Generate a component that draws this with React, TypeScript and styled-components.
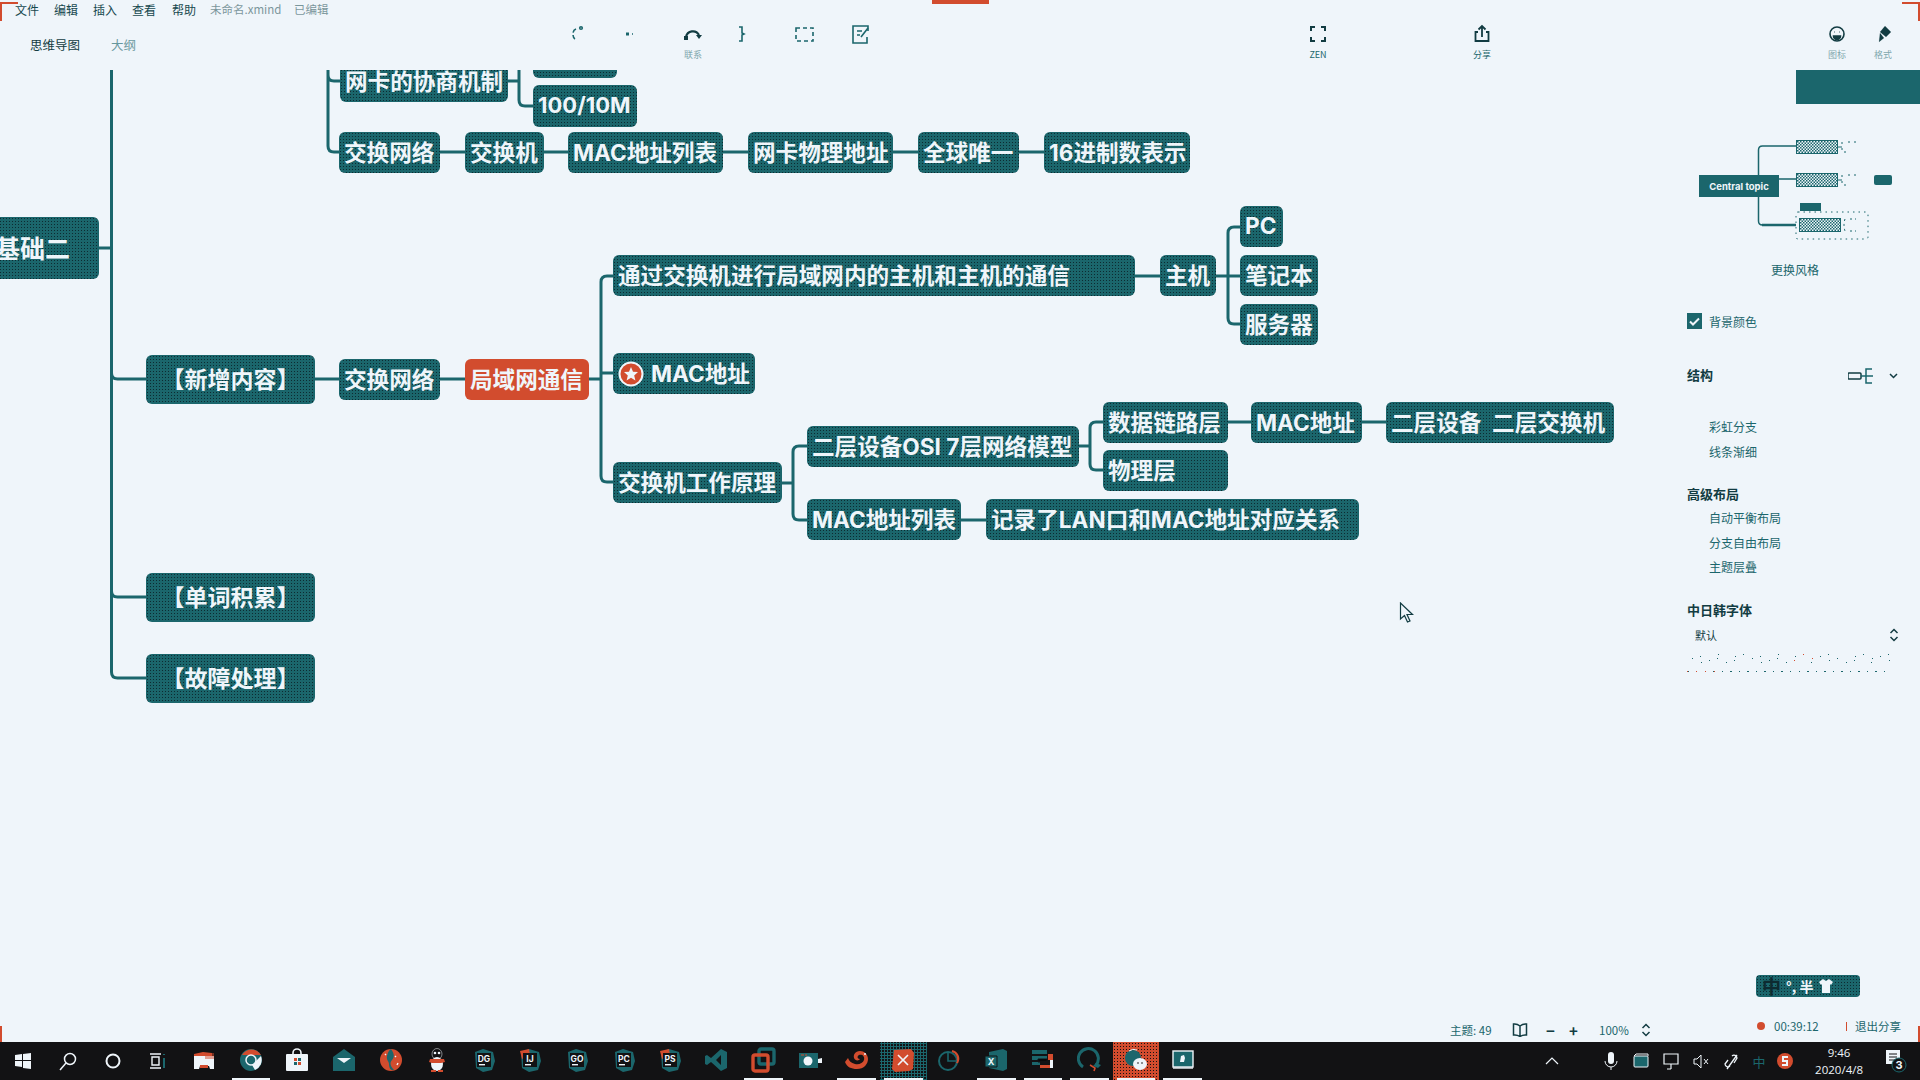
import React from "react";
import styled, { createGlobalStyle, css } from "styled-components";

const T = "#1b666c";
const O = "#d24c2e";
const W = "#eff5fa";
const K = "#121214";
const INK = "#17494f";
const CJK = `Inter, "Noto Sans CJK SC", "Noto Sans", sans-serif`;
const UI = `"Noto Sans CJK SC", "Noto Sans", sans-serif`;
const dots = (c: string) => css`
  background-image: radial-gradient(circle, ${c} 0.65px, transparent 0.85px);
  background-size: 3px 3px;
`;

const Global = createGlobalStyle`
  html, body { margin: 0; padding: 0; background: ${W}; }
  #root { width: 1920px; height: 1080px; overflow: hidden; }
  * { box-sizing: border-box; }
`;

const Screen = styled.div`
  position: relative;
  width: 1920px;
  height: 1080px;
  display: flex;
  flex-direction: column;
  background: ${W};
  font-family: ${UI};
  color: ${INK};
  overflow: hidden;
`;

/* screen-recorder frame marks */
const Mark = styled.i<{ $l?: number; $r?: number; $t?: number; $w: number; $h: number }>`
  position: absolute;
  z-index: 5;
  background: ${O};
  ${(p) => p.$l !== undefined && `left:${p.$l}px;`}
  ${(p) => p.$r !== undefined && `right:${p.$r}px;`}
  top: ${(p) => p.$t ?? 0}px;
  width: ${(p) => p.$w}px;
  height: ${(p) => p.$h}px;
`;

const Header = styled.header`
  height: 70px;
  flex: none;
  display: flex;
  flex-direction: column;
`;
const MenuBar = styled.div`
  height: 22px;
  display: flex;
  align-items: center;
  font-size: 12px;
  padding: 0 0 4px 15px;
`;
const MenuItem = styled.span<{ $w: number; $faint?: boolean }>`
  width: ${(p) => p.$w}px;
  flex: none;
  white-space: nowrap;
  ${(p) => p.$faint && "opacity: .55;font-size:11.5px;"}
`;
const ToolRow = styled.div`
  height: 48px;
  display: flex;
`;
const Tabs = styled.div`
  width: 552px;
  flex: none;
  display: flex;
  align-items: center;
  padding: 0 0 4px 30px;
  font-size: 12.5px;
`;
const Tab = styled.span<{ $muted?: boolean }>`
  margin-right: ${(p) => (p.$muted ? 0 : 31)}px;
  color: ${(p) => (p.$muted ? T : "#123c42")};
  ${(p) => p.$muted && "opacity:.65;"}
`;
const Tool = styled.div<{ $gap?: number }>`
  width: 52px;
  flex: none;
  margin-left: ${(p) => p.$gap ?? 0}px;
  display: flex;
  flex-direction: column;
  align-items: center;
  padding-top: 2px;
`;
const ToolIcon = styled.svg<{ $dark?: number }>`
  width: 20px;
  height: 20px;
  fill: none;
  stroke: ${(p) => (p.$dark ? "#123c42" : T)};
  stroke-width: ${(p) => p.$dark ?? 1.6};
`;
const ToolLabel = styled.span`
  font-size: 9px;
  line-height: 12px;
  margin-top: 5px;
  height: 12px;
  color: ${T};
`;
const FaintLabel = styled(ToolLabel)`
  opacity: 0.55;
`;

const Main = styled.main`
  flex: 1;
  min-height: 0;
  display: flex;
`;
const Canvas = styled.section`
  position: relative;
  width: 1640px;
  flex: none;
  overflow: hidden;
`;
const Wires = styled.svg`
  position: absolute;
  left: 0;
  top: 0;
  fill: none;
  stroke: ${T};
  stroke-width: 3;
`;
const Node = styled.div<{ $x: number; $y: number; $w: number; $h: number; $hot?: boolean; $center?: boolean; $fs?: number }>`
  position: absolute;
  left: ${(p) => p.$x}px;
  top: ${(p) => p.$y - 70}px;
  width: ${(p) => p.$w}px;
  height: ${(p) => p.$h}px;
  display: flex;
  align-items: center;
  justify-content: ${(p) => (p.$center ? "center" : "flex-start")};
  padding: 0 0 ${(p) => (p.$center ? 4 : 2)}px ${(p) => (p.$center ? 0 : 5)}px;
  border-radius: 6px;
  font-family: ${CJK};
  font-weight: 700;
  font-size: ${(p) => p.$fs ?? 22.6}px;
  white-space: pre;
  color: ${W};
  background-color: ${(p) => (p.$hot ? O : T)};
  ${(p) => !p.$hot && dots("#0d2b31")}
`;
const Star = styled.svg`
  width: 26px;
  height: 26px;
  flex: none;
  margin: 2px 7px 0 0;
`;
const Cursor = styled.svg`
  position: absolute;
  left: 1399px;
  top: 532px;
  width: 16px;
  height: 22px;
`;

const Side = styled.aside`
  position: relative;
  width: 280px;
  flex: none;
  display: flex;
  flex-direction: column;
  font-size: 12px;
  color: ${T};
`;
const Banner = styled.div`
  width: 124px;
  height: 34px;
  align-self: flex-end;
  background: ${T};
`;
const Preview = styled.svg`
  width: 280px;
  height: 100px;
  margin-top: 36px;
  flex: none;
`;
const Caption = styled.div`
  margin-top: 22px;
  height: 16px;
  line-height: 16px;
  padding-left: 30px;
  text-align: center;
`;
const CheckRow = styled.label`
  margin-top: 35px;
  height: 16px;
  padding-left: 47px;
  display: flex;
  align-items: center;
  gap: 7px;
`;
const Box = styled.span`
  width: 15px;
  height: 16px;
  background: ${T};
  display: flex;
  align-items: center;
  justify-content: center;
`;
const Heading = styled.div<{ $top: number }>`
  margin-top: ${(p) => p.$top}px;
  height: 18px;
  line-height: 18px;
  padding: 0 22px 2px 47px;
  display: flex;
  align-items: center;
  justify-content: space-between;
  font-size: 13px;
  font-weight: 700;
  color: #123c42;
`;
const Options = styled.div<{ $top: number }>`
  margin-top: ${(p) => p.$top}px;
  padding-left: 69px;
  display: flex;
  flex-direction: column;
`;
const Option = styled.div`
  height: 24.5px;
  line-height: 24.5px;
`;
const Mini = styled.svg`
  width: 50px;
  height: 18px;
  margin-top: 2px;
  fill: none;
  stroke: #123c42;
  stroke-width: 1.5;
`;
const SelectRow = styled.div`
  margin-top: 5px;
  height: 20px;
  padding: 0 21px 0 55px;
  display: flex;
  align-items: center;
  justify-content: space-between;
  font-size: 11px;
  color: #123c42;
`;
const UpDown = styled.svg`
  width: 10px;
  height: 14px;
  fill: none;
  stroke: #123c42;
  stroke-width: 1.5;
`;
const Speckle = styled.svg`
  margin: 8px 0 0 47px;
  width: 210px;
  height: 30px;
`;
const Ime = styled.div`
  position: absolute;
  left: 116px;
  top: 905px;
  width: 104px;
  height: 22px;
  border-radius: 4px;
  background-color: ${T};
  ${dots("#0d2b31")}
  display: flex;
  align-items: center;
  gap: 5px;
  padding-left: 6px;
  font-size: 14px;
  font-weight: 700;
  color: ${W};
`;
const ImeMain = styled.span`
  color: #0d2b31;
  font-size: 19px;
  line-height: 20px;
`;

const StatusBar = styled.footer`
  height: 27px;
  flex: none;
  display: flex;
  align-items: flex-end;
  padding-left: 1450px;
  font-size: 11.5px;
  color: ${T};
`;
const ZoomGroup = styled.div`
  width: 307px;
  flex: none;
  height: 16px;
  margin-bottom: 4px;
  display: flex;
  align-items: center;
`;
const Zoomer = styled.span<{ $w: number }>`
  width: ${(p) => p.$w}px;
  flex: none;
  white-space: nowrap;
  display: flex;
  align-items: center;
`;
const Sym = styled.b`
  font-size: 15px;
  color: #123c42;
`;
const RecGroup = styled.div`
  height: 16px;
  margin-bottom: 8px;
  display: flex;
  align-items: center;
`;
const RecDot = styled.i`
  width: 8px;
  height: 8px;
  border-radius: 50%;
  background: ${O};
  margin-right: 9px;
`;
const RecTick = styled.i`
  width: 1px;
  height: 9px;
  background: ${O};
  margin: 0 8px 0 -9px;
`;

const Taskbar = styled.nav`
  height: 38px;
  flex: none;
  background: ${K};
  display: flex;
  align-items: stretch;
`;
const SysBtn = styled.div`
  width: 45px;
  flex: none;
  display: flex;
  align-items: center;
  justify-content: center;
`;
const AppBtn = styled.div<{ $on?: boolean; $bg?: "teal" | "orange" }>`
  position: relative;
  width: 46.6px;
  flex: none;
  display: flex;
  align-items: center;
  justify-content: center;
  padding-bottom: 3px;
  ${(p) => p.$bg === "teal" && css`background-color:${K};background-image:radial-gradient(circle,${T} 1.1px,transparent 1.3px);background-size:3px 3px;`}
  ${(p) => p.$bg === "orange" && css`background-color:${O};background-image:radial-gradient(circle,${K} .6px,transparent .85px);background-size:3px 3px;`}
  ${(p) =>
    p.$on &&
    css`
      &::after {
        content: "";
        position: absolute;
        left: 4px;
        right: 4px;
        bottom: 0;
        height: 2px;
        background: ${W};
      }
    `}
`;
const Glyph = styled.svg`
  width: 26px;
  height: 26px;
`;
const Gap = styled.div<{ $w: number }>`
  width: ${(p) => p.$w}px;
  flex: none;
`;
const Tray = styled.div<{ $w?: number; $teal?: boolean }>`
  display: flex;
  align-items: center;
  flex: none;
  width: ${(p) => p.$w ?? 30}px;
  justify-content: center;
  color: ${(p) => (p.$teal ? T : W)};
  font-size: 13px;
`;
const Clock = styled.div`
  width: 82px;
  flex: none;
  display: flex;
  flex-direction: column;
  align-items: center;
  justify-content: center;
  gap: 1px;
  font-family: "Open Sans", sans-serif;
  font-size: 11.5px;
  line-height: 16px;
  color: ${W};
`;
const SmallGlyph = styled.svg`
  width: 20px;
  height: 20px;
`;

type N = { t: string; x: number; y: number; w: number; h?: number; hot?: boolean; center?: boolean; fs?: number };
const nodes: N[] = [
  { t: "", x: 533, y: 50, w: 84, h: 28 },
  { t: "网卡的协商机制", x: 340, y: 60, w: 168, h: 42 },
  { t: "100/10M", x: 533, y: 85, w: 104, h: 42, fs: 22 },
  { t: "交换网络", x: 339, y: 132, w: 101 },
  { t: "交换机", x: 465, y: 132, w: 79 },
  { t: "MAC地址列表", x: 568, y: 132, w: 155 },
  { t: "网卡物理地址", x: 748, y: 132, w: 145 },
  { t: "全球唯一", x: 918, y: 132, w: 101 },
  { t: "16进制数表示", x: 1044, y: 132, w: 146 },
  { t: "PC", x: 1240, y: 206, w: 43 },
  { t: "通过交换机进行局域网内的主机和主机的通信", x: 613, y: 255, w: 522 },
  { t: "主机", x: 1160, y: 255, w: 56 },
  { t: "笔记本", x: 1240, y: 255, w: 78 },
  { t: "服务器", x: 1240, y: 304, w: 78 },
  { t: "基础二", x: -10, y: 217, w: 109, h: 62, fs: 25 },
  { t: "【新增内容】", x: 146, y: 355, w: 169, h: 49, center: true, fs: 23 },
  { t: "交换网络", x: 339, y: 359, w: 101 },
  { t: "局域网通信", x: 465, y: 359, w: 124, hot: true },
  { t: "数据链路层", x: 1103, y: 402, w: 125 },
  { t: "MAC地址", x: 1251, y: 402, w: 111 },
  { t: "二层设备  二层交换机", x: 1386, y: 402, w: 228 },
  { t: "二层设备OSI 7层网络模型", x: 807, y: 426, w: 272 },
  { t: "物理层", x: 1103, y: 450, w: 125 },
  { t: "交换机工作原理", x: 613, y: 462, w: 169 },
  { t: "MAC地址列表", x: 807, y: 499, w: 154 },
  { t: "记录了LAN口和MAC地址对应关系", x: 986, y: 499, w: 373 },
  { t: "【单词积累】", x: 146, y: 573, w: 169, h: 49, center: true, fs: 23 },
  { t: "【故障处理】", x: 146, y: 654, w: 169, h: 49, center: true, fs: 23 },
];

const wirePaths = [
  "M111.5 70V672q0 6 6 6H146M111.5 373q0 6 6 6H146M111.5 591q0 6 6 6H146M99 248H111",
  "M328 70V146q0 6 6 6H339M328 75q0 6 6 6H340M508 81H519M519 70V100q0 6 6 6H533",
  "M440 152H465M544 152H568M723 152H748M893 152H918M1019 152H1044",
  "M315 379H339M440 379H465M589 379H601M601 373H613",
  "M613 276H607q-6 0-6 6V476q0 6 6 6H613",
  "M782 483H793M807 446H799q-6 0-6 6V514q0 6 6 6H807",
  "M1079 446H1090M1103 422H1096q-6 0-6 6V464q0 6 6 6H1103",
  "M961 520H986M1228 422H1251M1362 422H1386",
  "M1135 276H1160M1216 276H1240M1240 227H1234q-6 0-6 6V318q0 6 6 6H1240",
];

const Svg: React.FC<{ children: React.ReactNode }> = ({ children }) => <Glyph viewBox="0 0 26 26">{children}</Glyph>;

const Ide: React.FC<{ label: string; accent?: boolean }> = ({ label, accent }) => (
  <Svg>
    <path d="M4 5l8-3 10 3 2 9-3 9-9 2-7-4z" fill={T} />
    {accent && <path d="M3 4l9-2 1 6-8 4z" fill={O} />}
    <rect x="6" y="6" width="14" height="14" fill={K} />
    <text x="13" y="15" fontSize="8.5" fontWeight="700" textAnchor="middle" fill={W} fontFamily="Inter, sans-serif">{label}</text>
    <rect x="8" y="17" width="6" height="1.4" fill={W} />
  </Svg>
);

const apps: { el: React.ReactNode; on?: boolean; bg?: "teal" | "orange" }[] = [
  { el: <Svg><path d="M3 7l9-2 9 1v3H3z" fill={O} /><path d="M3 9h20v13h-4l-1-3H9l-1 3H3z" fill={W} /><path d="M9 18h8v3H9z" fill={O} /><path d="M14 6h9v6h-9z" fill={O} opacity=".5" /></Svg> },
  { el: <Svg><circle cx="13" cy="13" r="11" fill={T} /><path d="M4 8a11 11 0 0 1 19 0H13z" fill={O} /><path d="M23 9a11 11 0 0 1-6 14l-3-5z" fill={W} /><circle cx="13" cy="13" r="5" fill={T} stroke={W} strokeWidth="1.5" /></Svg>, on: true },
  { el: <Svg><path d="M9 8V6a4 4 0 0 1 8 0v2" fill="none" stroke={W} strokeWidth="1.6" /><rect x="2" y="7" width="22" height="17" rx="1" fill={W} /><rect x="10" y="11" width="3" height="3" fill={O} /><rect x="14" y="11" width="3" height="3" fill={T} /><rect x="10" y="15" width="3" height="3" fill={T} /><rect x="14" y="15" width="3" height="3" fill={O} /></Svg> },
  { el: <Svg><path d="M2 10l11-8 11 8v14H2z" fill={T} /><path d="M6 11h14l-7 5z" fill={W} /></Svg> },
  { el: <Svg><circle cx="13" cy="13" r="11" fill={O} /><path d="M13 2c3 4 4 8 1 11s-1 7 2 10c-4 1-5-3-5-6s-3-4-2-8 2-6 4-7z" fill={T} /><path d="M7 7l1 1M20 16l-1 2M17 9l1 1" stroke={W} strokeWidth="1.4" /></Svg> },
  { el: <Svg><ellipse cx="13" cy="7" rx="5" ry="5.5" fill={K} stroke={W} strokeWidth=".5" /><circle cx="11" cy="6" r="1.3" fill={W} /><circle cx="15" cy="6" r="1.3" fill={W} /><ellipse cx="13" cy="17" rx="6" ry="7" fill={W} /><path d="M6 12h14l1 3-4 1H8l-3-1z" fill={O} /><path d="M7 23h5v2H7zM14 23h5v2h-5z" fill={O} /></Svg> },
  { el: <Ide label="DG" /> },
  { el: <Ide label="IJ" accent /> },
  { el: <Ide label="GO" /> },
  { el: <Ide label="PC" /> },
  { el: <Ide label="PS" accent /> },
  { el: <Svg><path d="M17 2l6 3v16l-6 3L7 15l-4 3-2-1v-8l2-1 4 3zM17 8l-5 5 5 5z" fill={T} fillRule="evenodd" /></Svg> },
  { el: <Svg><rect x="9" y="2" width="15" height="15" rx="2" fill="none" stroke={T} strokeWidth="3.4" /><rect x="3" y="8" width="15" height="16" rx="2" fill="none" stroke={O} strokeWidth="3.4" /></Svg>, on: true },
  { el: <Svg><rect x="2" y="6" width="19" height="15" fill={T} /><path d="M21 12l4-1v5h-4z" fill={W} /><circle cx="11" cy="14" r="4.5" fill={W} /><path d="M4 8h3M8 8h2" stroke={O} /></Svg> },
  { el: <Svg><path d="M1 15c2 5 6 7 12 7 7 0 11-5 11-10 0-5-4-8-8-8-5 0-7 4-6 7 1 3 5 3 6 1-3 0-3-3-1-4 3-1 6 1 5 5-1 3-5 5-9 4-4-1-6-3-7-6z" fill={O} /><circle cx="21" cy="7" r="1" fill={W} /></Svg>, on: true },
  { el: <Svg><path d="M4 3l17-1 3 4-1 16-4 2-14 1-3-3z" fill={O} /><path d="M8 8l5 5 5-5M8 18l5-5 5 5" fill="none" stroke={W} strokeWidth="1.6" /></Svg>, on: true, bg: "teal" },
  { el: <Svg><circle cx="11" cy="14" r="9" fill="none" stroke={T} strokeWidth="2" /><path d="M15 4c5 1 8 7 5 12" fill="none" stroke={O} strokeWidth="2.2" /><path d="M11 5v9h9" fill="none" stroke={T} strokeWidth="1.6" /></Svg> },
  { el: <Svg><path d="M6 5l14-3 4 2v18l-4 2-14-3z" fill={T} /><path d="M2 9h12v11H2z" fill={T} stroke={K} /><text x="8" y="18" fontSize="9" fontWeight="700" textAnchor="middle" fill={W} fontFamily="Inter, sans-serif">X</text></Svg>, on: true },
  { el: <Svg><path d="M2 3h15v4H2zM2 9h15v4H2zM2 15h8v3H2z" fill={T} /><path d="M10 21h13V8h-5v3h2v7H10z" fill={W} /><path d="M18 7h5v6h-5zM10 18h10v3H10z" fill={O} /><path d="M8 12h9v2H8zM8 15h9" stroke={K} /></Svg>, on: true },
  { el: <Svg><path d="M6 20a10 10 0 1 1 13-2" fill="none" stroke={T} strokeWidth="3" /><path d="M16 19l3-3 5 2-3 3z" fill={T} /><path d="M13 18l5 3-1 3" stroke={O} strokeWidth="1.6" fill="none" /></Svg>, on: true },
  { el: <Svg><circle cx="10" cy="11" r="8" fill={T} /><path d="M6 4a8 8 0 0 1 8-1" stroke={W} fill="none" /><ellipse cx="17" cy="17" rx="7" ry="6" fill={W} /><circle cx="15" cy="16" r=".8" fill={K} /><circle cx="19" cy="16" r=".8" fill={K} /></Svg>, on: true, bg: "orange" },
  { el: <Svg><rect x="3" y="4" width="20" height="16" fill={T} stroke={W} strokeWidth="1.4" /><path d="M3 21h20" stroke={W} strokeWidth="1.4" /><path d="M11 9l3-1 1 3-1 4h-4z" fill={W} /></Svg>, on: true },
];

const speck = Array.from({ length: 70 }, (_, i) => ({
  x: (i * 47) % 205,
  y: i % 2 ? (i * 7) % 10 : 18 + ((i * 5) % 10),
  red: i % 11 === 0,
}));

const Ph: React.FC<{ x: number; y: number; w?: number }> = ({ x, y, w = 41 }) => (
  <rect x={x} y={y} width={w} height={13} fill="url(#stipple)" stroke={T} strokeWidth="1" />
);

export default function App() {
  return (
    <Screen>
      <Global />
      <Mark $l={0} $t={2} $w={18} $h={2} />
      <Mark $l={0} $t={2} $w={2} $h={19} />
      <Mark $r={0} $t={2} $w={18} $h={2} />
      <Mark $r={0} $t={2} $w={2} $h={19} />
      <Mark $l={932} $t={0} $w={57} $h={4} />
      <Mark $l={0} $t={1026} $w={2} $h={16} />
      <Mark $r={0} $t={1026} $w={2} $h={16} />

      <Header>
        <MenuBar>
          <MenuItem $w={39}>文件</MenuItem>
          <MenuItem $w={39}>编辑</MenuItem>
          <MenuItem $w={39}>插入</MenuItem>
          <MenuItem $w={40}>查看</MenuItem>
          <MenuItem $w={38}>帮助</MenuItem>
          <MenuItem $w={84} $faint>未命名.xmind</MenuItem>
          <MenuItem $w={60} $faint>已编辑</MenuItem>
        </MenuBar>
        <ToolRow>
          <Tabs>
            <Tab>思维导图</Tab>
            <Tab $muted>大纲</Tab>
          </Tabs>
          <Tool>
            <ToolIcon viewBox="0 0 20 20"><path d="M8 5q-3 1-3 5t2 5" strokeDasharray="5 2" /><circle cx="13" cy="4" r="1.3" /></ToolIcon>
            <ToolLabel />
          </Tool>
          <Tool>
            <ToolIcon viewBox="0 0 20 20"><path d="M6 10h3" strokeWidth="3" /><path d="M12 10h1" /></ToolIcon>
            <ToolLabel />
          </Tool>
          <Tool $gap={11}>
            <ToolIcon viewBox="0 0 20 20"><path d="M3 13a7 7 0 0 1 13-2" stroke="#123c42" strokeWidth="2.2" /><path d="M13 11h6l-3 4z" fill="#123c42" stroke="none" /><rect x="1" y="12" width="4" height="4" fill="#123c42" stroke="none" /></ToolIcon>
            <FaintLabel>联系</FaintLabel>
          </Tool>
          <Tool $gap={-3}>
            <ToolIcon viewBox="0 0 20 20"><path d="M7 3h3v6l2 1-2 1v6H7" /></ToolIcon>
            <ToolLabel />
          </Tool>
          <Tool $gap={10}>
            <ToolIcon viewBox="0 0 20 20"><rect x="2" y="4" width="17" height="13" strokeDasharray="4 3" /></ToolIcon>
            <ToolLabel />
          </Tool>
          <Tool $gap={4}>
            <ToolIcon viewBox="0 0 20 20"><path d="M18 7V2H3v17h14v-6" /><path d="M7 7h5M7 11h3M11 13l7-9" /></ToolIcon>
            <ToolLabel />
          </Tool>
          <Tool $gap={406}>
            <ToolIcon viewBox="0 0 20 20" $dark={2}><path d="M7 3H3v4M13 3h4v4M7 17H3v-4M13 17h4v-4" /></ToolIcon>
            <ToolLabel>ZEN</ToolLabel>
          </Tool>
          <Tool $gap={112}>
            <ToolIcon viewBox="0 0 20 20" $dark={1.8}><path d="M10 13V2M6.5 5.5L10 2l3.500 3.500M6 8H3.500v9h13V8H14" /></ToolIcon>
            <ToolLabel>分享</ToolLabel>
          </Tool>
          <Tool $gap={303}>
            <ToolIcon viewBox="0 0 20 20" $dark={1.6}><circle cx="10" cy="10" r="7" /><path d="M7 8h.5M12.500 8h.5" /><path d="M6.500 12h7a3.500 3.500 0 0 1-7 0z" fill="#123c42" /></ToolIcon>
            <FaintLabel>图标</FaintLabel>
          </Tool>
          <Tool $gap={-6}>
            <ToolIcon viewBox="0 0 20 20" $dark={0.1}><path d="M12 2l6 6-5 5-6-5z" fill="#123c42" /><path d="M7 9l4 5-5 4z" fill="#123c42" /></ToolIcon>
            <FaintLabel>格式</FaintLabel>
          </Tool>
        </ToolRow>
      </Header>

      <Main>
        <Canvas>
          <Wires width="1640" height="945" viewBox="0 70 1640 945">
            {wirePaths.map((d) => (
              <path key={d} d={d} />
            ))}
          </Wires>
          {nodes.map((n) => (
            <Node key={n.t + n.x + n.y} $x={n.x} $y={n.y} $w={n.w} $h={n.h ?? 41} $hot={n.hot} $center={n.center} $fs={n.fs}>
              {n.t}
            </Node>
          ))}
          <Node $x={613} $y={353} $w={142} $h={41}>
            <Star viewBox="0 0 26 26">
              <circle cx="13" cy="13" r="11.500" fill={O} stroke={W} strokeWidth="2" />
              <path d="M13 6l2 4.700 5 .4-3.800 3.300 1.200 5L13 16.700 8.600 19.400l1.200-5L6 11.100l5-.4z" fill={W} />
            </Star>
            MAC地址
          </Node>
          <Cursor viewBox="0 0 16 22">
            <path d="M1.500 1v16l4-3.500 3 6.500 2.500-1-3-6.500h5.500z" fill={W} stroke="#123c42" strokeWidth="1.200" />
          </Cursor>
        </Canvas>

        <Side>
          <Banner />
          <Preview viewBox="1640 140 280 100">
            <defs>
              <pattern id="stipple" width="3" height="3" patternUnits="userSpaceOnUse">
                <rect width="3" height="3" fill={W} />
                <rect width="1.500" height="1.500" fill={T} />
                <rect x="1.500" y="1.500" width="1.500" height="1.500" fill={T} />
              </pattern>
            </defs>
            <path d="M1758.500 175V150q0-4 4-4H1796M1779 179H1796M1758.500 197V221q0 4 4 4H1796" fill="none" stroke={T} strokeWidth="1.500" />
            <path d="M1762 225H1796" stroke={T} strokeWidth="2.500" />
            <rect x="1699" y="175" width="80" height="22" fill={T} />
            <text x="1739" y="190" fontSize="9.500" fontWeight="700" textAnchor="middle" fill={W} fontFamily="Inter, sans-serif">Central topic</text>
            <Ph x={1796.500} y={140.500} />
            <Ph x={1796.500} y={173.500} />
            <path d="M1837 147h5M1837 180h5" stroke={T} />
            <path d="M1842 142v10h6M1842 175v10h6M1848 142h8M1848 175h8" fill="none" stroke={T} strokeDasharray="2 4" />
            <rect x="1874" y="175" width="18" height="10" rx="2" fill={T} />
            <rect x="1800" y="203" width="21" height="8" fill={T} />
            <rect x="1796" y="212" width="72" height="27" rx="2" fill="none" stroke={T} strokeDasharray="1.500 4" />
            <Ph x={1799.500} y={218.500} />
            <path d="M1845 219q-2 6 0 12M1850 219h6M1850 231h6" fill="none" stroke={T} strokeDasharray="2 3" />
          </Preview>
          <Caption>更换风格</Caption>
          <CheckRow>
            <Box>
              <svg width="11" height="9" viewBox="0 0 11 9"><path d="M1 4.500L4 7.500 10 1.500" fill="none" stroke={W} strokeWidth="2" /></svg>
            </Box>
            背景颜色
          </CheckRow>
          <Heading $top={38}>
            结构
            <Mini viewBox="0 0 50 18">
              <rect x="0" y="6" width="13" height="6" rx="1" />
              <path d="M13 9h12M24 2h-6v14h6" stroke={T} />
              <path d="M42 7l3.500 3.500L49 7" />
            </Mini>
          </Heading>
          <Options $top={30}>
            <Option>彩虹分支</Option>
            <Option>线条渐细</Option>
          </Options>
          <Heading $top={22}>高级布局</Heading>
          <Options $top={2}>
            <Option>自动平衡布局</Option>
            <Option>分支自由布局</Option>
            <Option>主题层叠</Option>
          </Options>
          <Heading $top={22}>中日韩字体</Heading>
          <SelectRow>
            默认
            <UpDown viewBox="0 0 10 14"><path d="M1.500 5L5 1.500 8.500 5M1.500 9L5 12.500 8.500 9" /></UpDown>
          </SelectRow>
          <Speckle viewBox="0 0 210 30">
            {speck.map((s, i) => (
              <rect key={i} x={s.x} y={s.y} width="1" height="1" fill={s.red ? O : T} />
            ))}
          </Speckle>
          <Ime>
            <ImeMain>中</ImeMain>°, 半
            <svg width="16" height="16" viewBox="0 0 16 16"><path d="M5 1L1 4l2 3 1-1v9h8V6l1 1 2-3-4-3-3 2z" fill={W} /></svg>
          </Ime>
        </Side>
      </Main>

      <StatusBar>
        <ZoomGroup>
          <Zoomer $w={62}>主题: 49</Zoomer>
          <Zoomer $w={34}>
            <svg width="16" height="14" viewBox="0 0 16 14"><path d="M8 3Q5 .5 1.500 1v11Q5 11.500 8 13.500 11 11.500 14.500 12V1Q11 .5 8 3zM8 3v10" fill="none" stroke="#123c42" strokeWidth="1.500" /></svg>
          </Zoomer>
          <Zoomer $w={23}><Sym>−</Sym></Zoomer>
          <Zoomer $w={30}><Sym>+</Sym></Zoomer>
          <Zoomer $w={42}>100%</Zoomer>
          <UpDown viewBox="0 0 10 14"><path d="M1.500 5L5 1.500 8.500 5M1.500 9L5 12.500 8.500 9" /></UpDown>
        </ZoomGroup>
        <RecGroup>
          <RecDot />
          <Zoomer $w={81}>00:39:12</Zoomer>
          <RecTick />
          退出分享
        </RecGroup>
      </StatusBar>

      <Taskbar>
        <SysBtn>
          <SmallGlyph viewBox="0 0 20 20"><path d="M2 4l7-1v6H2zM10 3l8-1v7h-8zM2 10h7v6l-7-1zM10 10h8v8l-8-1z" fill={W} /></SmallGlyph>
        </SysBtn>
        <SysBtn>
          <SmallGlyph viewBox="0 0 20 20"><circle cx="12" cy="8" r="5.500" fill="none" stroke={W} strokeWidth="1.500" /><path d="M8 12l-6 7" stroke={W} strokeWidth="1.500" /></SmallGlyph>
        </SysBtn>
        <SysBtn>
          <SmallGlyph viewBox="0 0 20 20"><circle cx="10" cy="10" r="6.500" fill="none" stroke={W} strokeWidth="2" /></SmallGlyph>
        </SysBtn>
        <SysBtn>
          <SmallGlyph viewBox="0 0 20 20"><path d="M2 3h11M2 17h11M4 6h7v8H4z" fill="none" stroke={W} strokeWidth="1.400" /><path d="M16 3v1M16 7v10" stroke={T} strokeWidth="2" /></SmallGlyph>
        </SysBtn>
        <Gap $w={1} />
        {apps.map((a, i) => (
          <AppBtn key={i} $on={a.on} $bg={a.bg}>
            {a.el}
          </AppBtn>
        ))}
        <Gap $w={331} />
        <Tray>
          <SmallGlyph viewBox="0 0 20 20"><path d="M4 13l6-6 6 6" fill="none" stroke={W} strokeWidth="1.200" /></SmallGlyph>
        </Tray>
        <Gap $w={29} />
        <Tray>
          <SmallGlyph viewBox="0 0 20 20"><rect x="7" y="1" width="6" height="12" rx="3" fill={W} /><path d="M4 10a6 6 0 0 0 12 0M10 16v3" stroke={W} fill="none" /></SmallGlyph>
        </Tray>
        <Tray>
          <SmallGlyph viewBox="0 0 20 20"><rect x="3" y="5" width="14" height="11" rx="1" fill={T} stroke={W} /><path d="M3 5l2-2h12v2" stroke={W} fill="none" /></SmallGlyph>
        </Tray>
        <Tray>
          <SmallGlyph viewBox="0 0 20 20"><path d="M3 3h14v10H3zM10 13v5M6 18h4" fill="none" stroke={W} strokeWidth="1.200" /></SmallGlyph>
        </Tray>
        <Tray>
          <SmallGlyph viewBox="0 0 20 20"><path d="M3 8h3l4-4v13l-4-4H3z" fill="none" stroke={W} /><path d="M13 8l4 5M17 8l-4 5" stroke={W} /></SmallGlyph>
        </Tray>
        <Tray>
          <SmallGlyph viewBox="0 0 20 20"><path d="M6 18l10-14M9 15a3 3 0 0 1-5-2l3-4M11 5a3 3 0 0 1 5 2l-3 5" fill="none" stroke={W} strokeWidth="1.300" /></SmallGlyph>
        </Tray>
        <Tray $w={26} $teal>中</Tray>
        <Tray $w={26}>
          <SmallGlyph viewBox="0 0 20 20"><circle cx="10" cy="10" r="8" fill={O} /><path d="M13 6H8v4h4v4H7" fill="none" stroke={W} strokeWidth="2" /></SmallGlyph>
        </Tray>
        <Clock>
          <span>9:46</span>
          <span>2020/4/8</span>
        </Clock>
        <Tray>
          <svg width="26" height="28" viewBox="0 0 26 28"><path d="M4 3h14v14H4z" fill={W} /><path d="M7 7h8M7 10h8M7 13h6" stroke={K} /><circle cx="17" cy="18" r="7" fill={K} stroke={T} /><text x="17" y="22" fontSize="11" fontWeight="700" textAnchor="middle" fill={W} fontFamily="Inter, sans-serif">3</text></svg>
        </Tray>
      </Taskbar>
    </Screen>
  );
}
